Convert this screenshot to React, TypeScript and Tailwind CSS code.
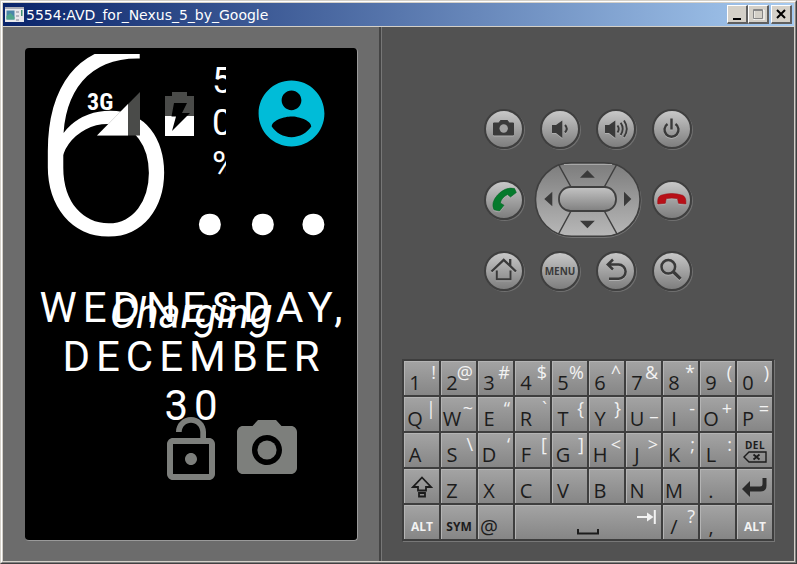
import type { ReactNode } from "react";

type KeyDef = {
  id: string;
  main?: string;
  alt?: string;
  wide?: boolean;
  content?: ReactNode;
};

const ShiftIcon = () => (
  <svg width="22" height="22" viewBox="0 0 22 22" fill="none" stroke="#1c1c1c" strokeWidth="1.8">
    <path d="M11 1.5L20 11h-5v3.500H7V11H2z" />
    <path d="M8 17h6v3.500H8z" />
  </svg>
);

const EnterIcon = () => (
  <svg width="26" height="20" viewBox="0 0 26 20">
    <path d="M0 12L8 4v5.500h10q2.500 0 2.500-2.500V1h4v7.500q0 6-6 6H8V20z" fill="#2a2a2a" />
  </svg>
);

const DelIcon = () => (
  <span className="flex flex-col items-center text-[10px] leading-3 font-bold tracking-wider">
    DEL
    <svg width="24" height="12" viewBox="0 0 24 12" fill="none" stroke="#1c1c1c" strokeWidth="1.4">
      <path d="M1 6L6 1h17v10H6z" />
      <path d="M10.500 3.500l6 5M16.500 3.500l-6 5" strokeWidth="1.800" />
    </svg>
  </span>
);

const SpaceIcon = () => (
  <span className="relative h-full w-full">
    <svg className="absolute top-1 right-[5px]" width="19" height="14" viewBox="0 0 19 14">
      <path d="M0 7h15M17.800 0v14" stroke="#f2f2f2" strokeWidth="2" fill="none" />
      <path d="M10 2.500L16.500 7L10 11.500z" fill="#f2f2f2" />
    </svg>
    <svg className="absolute bottom-1 left-[61px]" width="22" height="6" viewBox="0 0 22 6">
      <path d="M1 0v4.500h20V0" stroke="#1c1c1c" strokeWidth="2" fill="none" />
    </svg>
  </span>
);

const altLabel = (
  <span className="self-end pb-1 text-xs leading-4 font-bold text-[#f2f2f2]">ALT</span>
);

const pairs = (rows: string[]): KeyDef[] =>
  rows.map((pair) => ({ id: pair[0], main: pair[0], alt: pair[1] }));

const keys: KeyDef[] = [
  ...pairs(["1!", "2@", "3#", "4$", "5%", "6^", "7&", "8*", "9(", "0)"]),
  ...pairs(["Q|", "W~", "E“", "R`", "T{", "Y}", "U_", "I-", "O+", "P="]),
  ...pairs(["A", "S\\", "D‘", "F[", "G]", "H<", "J>", "K;", "L:"]),
  { id: "Delete", content: <DelIcon /> },
  { id: "Shift", content: <ShiftIcon /> },
  ...pairs(["Z", "X", "C", "V", "B", "N", "M", "."]),
  { id: "Enter", content: <EnterIcon /> },
  { id: "Left alt", content: altLabel },
  {
    id: "Symbols",
    content: <span className="self-end pb-1 text-xs leading-4 font-bold">SYM</span>,
  },
  ...pairs(["@"]),
  { id: "Space", wide: true, content: <SpaceIcon /> },
  ...pairs(["/?", ","]),
  { id: "Right alt", content: altLabel },
];

const Key = ({ item }: { item: KeyDef }) => (
  <button
    aria-label={item.id}
    className={`grid h-[34px] border-t border-l border-[#b4b4b4] bg-linear-to-b from-[#a3a3a3] to-[#868686] text-[#1c1c1c] ${
      item.wide ? "col-span-4" : ""
    }`}
  >
    {item.content ? (
      <span className="flex h-full w-full items-center justify-center">{item.content}</span>
    ) : (
      <>
        <span className="col-start-1 row-start-1 w-5 self-end text-center text-xl leading-6">
          {item.main}
        </span>
        <span className="col-start-1 row-start-1 self-start pr-[3px] text-right text-lg leading-5 text-[#f2f2f2]">
          {item.alt}
        </span>
      </>
    )}
  </button>
);

const RoundButton = ({ label, children }: { label: string; children: ReactNode }) => (
  <button
    aria-label={label}
    className="flex h-10 w-10 items-center justify-center rounded-full border-2 border-[#3f3f3f] bg-linear-to-b from-[#c8c8c8] to-[#7e7e7e] shadow-[1px_1px_0_#707070]"
  >
    {children}
  </button>
);

const Glyph = ({ children }: { children: ReactNode }) => (
  <svg
    className="shrink-0 drop-shadow-[0_1px_0_#b0b0b0]"
    width="40"
    height="40"
    viewBox="0 0 40 40"
    fill="none"
    stroke="#3a3a3a"
    strokeWidth="2"
  >
    {children}
  </svg>
);

const DPad = () => (
  <div className="relative grid h-[76px] w-[108px] grid-cols-[24px_1fr_24px] grid-rows-3">
    <svg className="absolute inset-0" width="108" height="76" viewBox="0 0 108 76">
      <defs>
        <linearGradient id="pad" x1="0" y1="0" x2="0" y2="1">
          <stop offset="0" stopColor="#7c7c7c" />
          <stop offset="1" stopColor="#b8b8b8" />
        </linearGradient>
        <linearGradient id="ok" x1="0" y1="0" x2="0" y2="1">
          <stop offset="0" stopColor="#c4c4c4" />
          <stop offset="1" stopColor="#808080" />
        </linearGradient>
      </defs>
      <rect x="2" y="2" width="105" height="73.500" rx="36" fill="none" stroke="#747474" />
      <rect x="1.500" y="0.800" width="104.500" height="73.500" rx="36" fill="url(#pad)" stroke="#3f3f3f" strokeWidth="1.600" />
      <path d="M30 2.500h48" stroke="#a8a8a8" />
      <path
        d="M24.300 2L37 25M83 2L70.300 25M37 49L24.500 72M70.300 49L83 72"
        stroke="#3f3f3f"
        strokeWidth="1.500"
      />
      <rect x="25" y="25" width="57" height="24" rx="11.500" fill="url(#ok)" stroke="#3f3f3f" strokeWidth="1.800" />
      <path
        d="M46 15.700L53.400 8.300L60.800 15.700zM46 58.700L53.400 66.300L60.800 58.700zM10.300 37L18.300 29.700V44.300zM97.300 37L90 29.700V44.300z"
        fill="#3a3a3a"
      />
    </svg>
    <button aria-label="Left" className="z-10 row-span-3" />
    <button aria-label="Up" className="z-10" />
    <button aria-label="Right" className="z-10 row-span-3" />
    <button aria-label="Select" className="z-10 rounded-full" />
    <button aria-label="Down" className="z-10" />
  </div>
);

const Controls = () => (
  <div className="flex w-[208px] flex-col gap-[13px]">
    <div className="flex justify-between">
      <RoundButton label="Camera">
        <Glyph>
          <path d="M9.500 14h5.500l1.500-2.500h7L25 14h4.500v12h-20z" fill="#3a3a3a" strokeWidth="1" />
          <circle cx="19.700" cy="19.500" r="4.200" fill="#a2a2a2" stroke="none" />
        </Glyph>
      </RoundButton>
      <RoundButton label="Volume down">
        <Glyph>
          <path d="M12 16h4l6.300-4.500v17.500L16 24h-4z" fill="#3a3a3a" stroke="none" />
          <path d="M25 16q3.500 3.700 0 7.500" />
        </Glyph>
      </RoundButton>
      <RoundButton label="Volume up">
        <Glyph>
          <path d="M9 16h4l6.300-4.500v17.500L13 24H9z" fill="#3a3a3a" stroke="none" />
          <path d="M21.500 16.500q2.500 3.500 0 7M24.700 13.800q4 6 0 12.200M28 11.500q5.500 8.300 0 16.500" strokeWidth="1.900" />
        </Glyph>
      </RoundButton>
      <RoundButton label="Power">
        <Glyph>
          <path d="M15.500 15A7 7 0 1 0 23.500 15M19.500 9.500v11" strokeWidth="2.400" />
        </Glyph>
      </RoundButton>
    </div>
    <div className="flex items-center justify-between">
      <RoundButton label="Call">
        <Glyph>
          <path
            d="M30.500 8.500L32.300 12.500L26.500 17L23.500 14.500Q17.500 17.500 16.300 23L20 25.300L15.500 31L10 29.800Q6.500 23 13.500 15Q21.500 6.500 30.500 8.500z"
            fill="#057a2c"
            stroke="#056325"
            strokeWidth="0.600"
          />
        </Glyph>
      </RoundButton>
      <DPad />
      <RoundButton label="End call">
        <Glyph>
          <path
            d="M5.800 24Q5 17 9 15.300Q19.500 11.800 30.500 15.300Q34.500 17 33.800 24L26.500 23.300L25.500 18.600Q19.800 17.500 14.200 18.600L13.300 23.300z"
            fill="#b80f17"
            stroke="#9a0c12"
            strokeWidth="0.600"
          />
        </Glyph>
      </RoundButton>
    </div>
    <div className="flex justify-between">
      <RoundButton label="Home">
        <Glyph>
          <path d="M7.500 20.500L19.700 8.800L32 20.500M26.200 8v6.500" strokeWidth="2.300" />
          <path d="M12.800 19.500v8.700h13.700v-8.700" />
        </Glyph>
      </RoundButton>
      <RoundButton label="Menu">
        <span className="text-[10px] leading-4 font-bold text-[#3a3a3a]">MENU</span>
      </RoundButton>
      <RoundButton label="Back">
        <Glyph>
          <path d="M17 8.500L11.800 13.500L17 18.500M12 13.500H22.500a7 7 0 0 1 0 14.200H13" strokeWidth="2.500" />
        </Glyph>
      </RoundButton>
      <RoundButton label="Search">
        <Glyph>
          <circle cx="16.300" cy="15.800" r="6.800" strokeWidth="2.500" />
          <path d="M21.500 21L28.500 27.800" strokeWidth="3.200" />
        </Glyph>
      </RoundButton>
    </div>
  </div>
);

const StatusBar = () => (
  <div className="absolute inset-x-0 top-0 flex items-start pl-[62px]">
    <div className="relative mt-11 h-11 w-[53px]">
      <svg className="absolute right-0" width="43" height="44" viewBox="0 0 43 44">
        <path d="M43 0v43.500H0z" fill="#4a4b49" />
        <path d="M31 12v31.500H0z" fill="#fff" />
      </svg>
      <span className="absolute top-0 left-0 font-['Roboto_Condensed','Liberation_Sans_Narrow',Roboto,sans-serif] text-2xl leading-5 font-bold">
        3G
      </span>
    </div>
    <svg className="mt-11 ml-[25px]" width="29" height="44" viewBox="0 0 29 44">
      <path d="M7 0h15v4h7v20H0V4h7z" fill="#4a4b49" />
      <path d="M0 24h29v20H0z" fill="#fff" />
      <path d="M9 11h13l-5 10h8L7 39l4-14.500H6.500z" fill="#000" />
    </svg>
    <div className="mt-3 ml-[18px] flex w-[14px] flex-col overflow-hidden text-4xl leading-[42px]">
      <span>5</span>
      <span>0</span>
      <span>%</span>
    </div>
    <svg className="mt-[26px] ml-[26px]" width="79" height="79" viewBox="0 0 24 24" fill="#00bcd8">
      <path d="M12 2C6.480 2 2 6.480 2 12s4.480 10 10 10 10-4.480 10-10S17.520 2 12 2zm0 3c1.660 0 3 1.340 3 3s-1.340 3-3 3-3-1.340-3-3 1.340-3 3-3zm0 14.200c-2.500 0-4.710-1.280-6-3.220.03-1.990 4-3.080 6-3.080 1.990 0 5.970 1.090 6 3.080-1.290 1.940-3.500 3.220-6 3.220z" />
    </svg>
  </div>
);

const Phone = () => (
  <div className="relative flex-1 overflow-hidden rounded border-r border-b border-[#9a9a9a] bg-black pt-[6px] font-[Roboto,sans-serif] text-white">
    <div className="h-48 overflow-hidden pl-[6px] text-[264px] leading-[180px] font-light whitespace-nowrap">
      6…
    </div>
    <StatusBar />
    <div className="relative mt-[37px] text-center text-[42px] leading-[49px]">
      <p className="-mx-2 pl-[6px] tracking-[6px]">
        WEDNESDAY,
        <br />
        DECEMBER
        <br />
        30
      </p>
      <p className="absolute inset-x-0 top-[6px] italic">Charging</p>
    </div>
    <div className="-mt-4 grid grid-cols-[1fr_72px_1fr] gap-1">
      <button aria-label="Unlock" className="col-start-2">
        <svg width="72" height="72" viewBox="0 0 24 24" fill="#7d7f7c">
          <path d="M12 17c1.100 0 2-.9 2-2s-.9-2-2-2-2 .9-2 2 .9 2 2 2zm6-9h-1V6c0-2.760-2.240-5-5-5S7 3.240 7 6h1.900c0-1.710 1.390-3.100 3.100-3.100 1.710 0 3.100 1.390 3.100 3.100v2H6c-1.100 0-2 .9-2 2v10c0 1.100.9 2 2 2h12c1.100 0 2-.9 2-2V10c0-1.100-.9-2-2-2zm0 12H6V10h12v10z" />
        </svg>
      </button>
      <button aria-label="Open camera" className="justify-self-start">
        <svg width="72" height="72" viewBox="0 0 24 24" fill="#7d7f7c">
          <circle cx="12" cy="12" r="3.200" />
          <path d="M9 2L7.170 4H4c-1.100 0-2 .9-2 2v12c0 1.100.9 2 2 2h16c1.100 0 2-.9 2-2V6c0-1.100-.9-2-2-2h-3.170L15 2H9zm3 15c-2.760 0-5-2.240-5-5s2.240-5 5-5 5 2.240 5 5-2.240 5-5 5z" />
        </svg>
      </button>
    </div>
  </div>
);

const captionButton =
  "flex h-[19px] w-[21px] items-center justify-center border-t border-l border-r-2 border-b-2 border-t-white border-l-white border-r-[#606060] border-b-[#606060] bg-[#d4d0c8]";

const TitleBar = () => (
  <div className="flex h-[24px] items-center border-b border-[#d4d0c8] bg-linear-to-r/srgb from-[#0a246a] to-[#a6caf0] pr-[2px] pl-[2px]">
    <svg width="19" height="15" viewBox="0 0 19 15">
      <path d="M0 0h19v15H0z" fill="#e9e9ec" />
      <path d="M0 0h19v2H0z" fill="#a9abb5" />
      <path d="M1.500 3.500h8v9h-8z" fill="#4a86a8" />
      <path d="M1.500 9l4-3 4 4v2.500h-8z" fill="#4fa58c" />
      <path d="M11 4h3v2h-3zM11 8h3v2h-3zM11 12h3v2h-3z" fill="#b5b7bf" />
      <path d="M16 3h1.500v6H16z" fill="#3f9273" />
    </svg>
    <h1 className="ml-[2px] flex-1 font-['DejaVu_Sans',sans-serif] text-sm whitespace-nowrap text-white">
      5554:AVD_for_Nexus_5_by_Google
    </h1>
    <div className="flex">
      <button aria-label="Minimize" className={captionButton}>
        <svg width="14" height="12" viewBox="0 0 14 12">
          <path d="M3 10h8v2H3z" fill="#000" />
        </svg>
      </button>
      <button aria-label="Maximize" disabled className={captionButton}>
        <svg width="14" height="12" viewBox="0 0 14 12" fill="none">
          <path d="M3 2h10v10H3z" stroke="#fff" />
          <path d="M2.500 1.500h9v9h-9zM2.500 2.500h9" stroke="#868686" />
        </svg>
      </button>
      <button aria-label="Close" className={`${captionButton} ml-[2px]`}>
        <svg width="14" height="12" viewBox="0 0 14 12">
          <path d="M3 2l8 8M11 2l-8 8" stroke="#000" strokeWidth="2" />
        </svg>
      </button>
    </div>
  </div>
);

const App = () => {
  return (
    <div className="flex min-h-screen flex-col border-t border-r border-b border-l border-t-[#d4d0c8] border-r-[#404040] border-b-[#404040] border-l-[#d4d0c8]">
      <div className="flex flex-1 flex-col border-t border-r border-b border-l border-t-white border-r-[#808080] border-b-[#808080] border-l-white">
        <div className="flex flex-1 flex-col border border-[#d4d0c8]">
          <TitleBar />
          <main className="grid flex-1 grid-cols-[378fr_413fr]">
            <section className="flex flex-col border-r-2 border-[#444] bg-[#6c6c6c] pt-[21px] pr-[21px] pb-5 pl-[22px]">
              <Phone />
            </section>
            <section className="flex flex-col items-center justify-between border-l border-[#777] bg-[#525252] pt-[82px] pb-5 font-['Open_Sans','Noto_Sans',sans-serif]">
              <Controls />
              <div className="grid w-[372px] grid-cols-10 gap-[2px] bg-[#3e3e3e] p-[2px] shadow-[1px_1px_0_#777]">
                {keys.map((item) => (
                  <Key key={item.id} item={item} />
                ))}
              </div>
            </section>
          </main>
        </div>
      </div>
    </div>
  );
};

export default App;
